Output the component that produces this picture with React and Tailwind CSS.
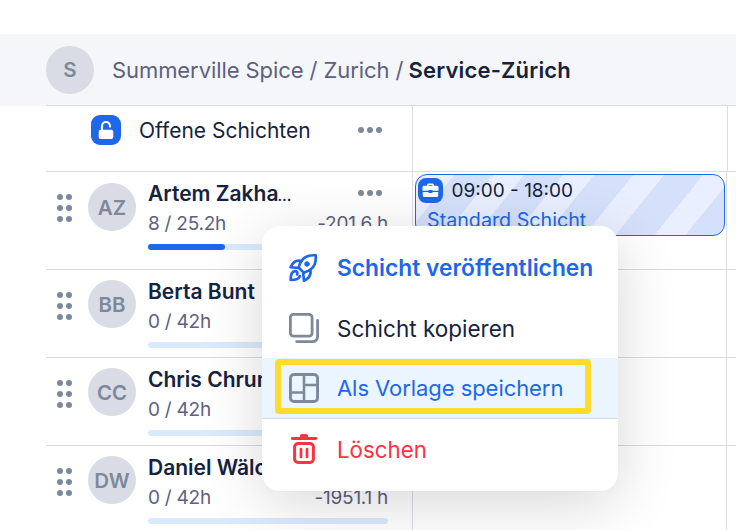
import React from "react";

const people = [
  { initials: "AZ", name: "Artem Zakha", cut: true, hours: "8 / 25.2h", balance: "-201.6 h", done: true, tall: true },
  { initials: "BB", name: "Berta Bunt", hours: "0 / 42h", balance: "" },
  { initials: "CC", name: "Chris Chrumm", hours: "0 / 42h", balance: "" },
  { initials: "DW", name: "Daniel Wälchli", hours: "0 / 42h", balance: "-1951.1 h" },
];

function More() {
  return (
    <div className="flex gap-[3px]">
      <span className="size-1.5 rounded-full bg-[#7d899b]" />
      <span className="size-1.5 rounded-full bg-[#7d899b]" />
      <span className="size-1.5 rounded-full bg-[#7d899b]" />
    </div>
  );
}

function Grip() {
  return (
    <div className="mt-[22px] grid h-[28px] w-[15px] shrink-0 grid-cols-2 gap-x-[3px] gap-y-[4.6px]">
      {[0, 1, 2, 3, 4, 5].map((i) => (
        <span key={i} className="size-1.5 rounded-full bg-[#7d899b]" />
      ))}
    </div>
  );
}

function Avatar({ children }) {
  return (
    <div className="flex size-12 shrink-0 items-center justify-center rounded-full bg-[#d9dce4] pt-[2px] text-[20.5px] font-semibold text-[#7d899b]">
      {children}
    </div>
  );
}

function Person({ p }) {
  return (
    <div className={`flex border-b border-[#d9dce4] ${p.tall ? "h-[98px]" : "h-[88px]"}`}>
      <div className="flex w-[367px] shrink-0 border-r border-[#d9dce4] pl-[10.5px]">
        <Grip />
        <div className={`ml-[16.5px] ${p.tall ? "pt-[11px]" : "pt-[10px]"}`}>
          <Avatar>{p.initials}</Avatar>
        </div>
        <div className="ml-3 w-60 pt-2">
          <div className="flex h-7 items-center justify-between">
            <span className="text-[21px] font-semibold whitespace-nowrap text-[#15233f]">
              {p.name}
              {p.cut && <span className="-ml-px text-[14.5px]">…</span>}
            </span>
            {p.tall && <div className="mr-1.5 -mt-[2px]"><More /></div>}
          </div>
          <div className="mt-0.5 flex h-7 items-center justify-between text-[19px] tracking-[-0.25px] text-[#5b6180]">
            <span>{p.hours}</span>
            <span>{p.balance}</span>
          </div>
          <div className="mt-1.5 h-1.5 rounded-full bg-[#d9ebff]">
            {p.done && <div className="h-1.5 w-[77px] rounded-full bg-[#1d67ea]" />}
          </div>
        </div>
      </div>
      <div className="w-[314px] shrink-0 border-r border-[#d9dce4] pt-0.5 pl-0.5">{p.tall && <Shift />}</div>
    </div>
  );
}

function Shift() {
  return (
    <div className="h-[62px] w-[310px] overflow-hidden rounded-[12px] border border-[#1d67ea] bg-[repeating-linear-gradient(129deg,#d5e0fb_0px,#d5e0fb_5.5px,#e9effe_5.5px,#e9effe_29.6px,#d5e0fb_29.6px,#d5e0fb_54.4px)] pt-[3px] pl-0.5">
      <div className="flex h-[25px] items-center">
        <div className="flex size-[25px] items-center justify-center rounded-lg bg-[#1d67ea]">
          <svg width="17" height="15" viewBox="0 0 17 15" fill="#fff">
            <path d="M5 3V2a1.500 1.500 0 0 1 1.500-1.500h4A1.500 1.500 0 0 1 12 2v1h-1.600V2H6.600v1z" />
            <path d="M2 2.800h13a1.500 1.500 0 0 1 1.500 1.500v3.400H10.500V7H6.500v.7H.5V4.300A1.500 1.500 0 0 1 2 2.800z" />
            <path d="M.8 8.900h5.700v1.100h4V8.900h5.700v3.900a1.300 1.300 0 0 1-1.300 1.300H2.100a1.300 1.300 0 0 1-1.300-1.300z" />
          </svg>
        </div>
        <span className="mt-[2px] ml-[8.5px] text-[19px] text-[#15233f]">09:00 - 18:00</span>
      </div>
      <div className="mt-[2px] ml-[9px] text-[19.700px] leading-[30px] text-[#1d67ea]">Standard Schicht</div>
    </div>
  );
}

function Rocket() {
  return (
    <svg width="30" height="30" viewBox="0 0 30 30" fill="none" stroke="#1d67ea" strokeWidth="2.700" strokeLinecap="round" strokeLinejoin="round">
      <path d="M26.700 2.300c-6-.4-10.700 1-13.700 5-1.700 2.300-2.700 4.700-3.400 7.200l5.100 5.100c2.500-.7 5-1.700 7.200-3.400 4-3 5.300-8 4.800-13.900z" />
      <path d="M12.500 8C7.500 6.700 4 8.500 1.600 14.200l7.600.8M21.200 16.700c1.300 5-.7 8.600-6.200 11l-.8-7.600" />
      <path d="M5.600 18.200C2.500 18.700 1.700 21.500 1.700 27c6 0 8.700-.8 9.200-4M5.600 18.200c2.200-.2 3.400 1.400 2.600 3.300" />
      <circle cx="18" cy="11" r="2.300" fill="#1d67ea" strokeWidth="1" />
    </svg>
  );
}

function Copy() {
  return (
    <svg width="30" height="30" viewBox="0 0 30 30" fill="none" stroke="#7d899b" strokeWidth="2.800" strokeLinecap="round">
      <rect x="1.400" y="1.400" width="21.700" height="21.700" rx="3" />
      <path d="M28.600 7.500v16.100a5 5 0 0 1-5 5h-16" />
    </svg>
  );
}

function Template() {
  return (
    <svg width="30" height="30" viewBox="0 0 30 30" fill="none" stroke="#7d899b" strokeWidth="2.900">
      <rect x="1.450" y="1.450" width="27.100" height="27.100" rx="3.500" />
      <path d="M15 2v26M2 19.500h13M15 12h13" strokeWidth="2.600" />
    </svg>
  );
}

function Trash() {
  return (
    <svg width="30" height="30" viewBox="0 0 30 30" fill="none" stroke="#fb323f" strokeLinecap="round">
      <path d="M3.300 4.500h23.400" strokeWidth="2.800" />
      <path d="M11 4V2a2 2 0 0 1 2-2h4a2 2 0 0 1 2 2v2z" fill="#fb323f" stroke="none" />
      <rect x="5.600" y="9.500" width="18.800" height="19" rx="3.500" strokeWidth="3" />
      <path d="M12 15v8M18 15v8" strokeWidth="2.700" />
    </svg>
  );
}

function Menu() {
  return (
    <div className="absolute top-[226px] left-[262px] h-[265px] w-[356px] rounded-[18px] bg-white py-3 shadow-[0_12px_60px_rgba(0,0,0,0.16)]">
      <div className="flex h-15 items-center gap-[18px] pl-[27px] text-[22.800px] font-semibold text-[#1d67ea]">
        <Rocket />
        <span className="pt-px">Schicht veröffentlichen</span>
      </div>
      <div className="flex h-15 items-center gap-[18px] pl-[27px] text-[22.500px] text-[#15233f]">
        <Copy />
        <span className="pt-px">Schicht kopieren</span>
      </div>
      <div className="relative flex h-[61px] items-center gap-[18px] border-b border-[#d3dae8] bg-[#eaf5ff] pl-[27px] text-[22px] tracking-[-0.06px] text-[#1d67ea]">
        <Template />
        <span>Als Vorlage speichern</span>
        <div className="absolute top-px left-[13px] h-[55px] w-[316px] rounded-[4px] border-6 border-[#ffdb2b]" />
      </div>
      <div className="flex h-15 items-center gap-[18px] pl-[27px] text-[22.300px] text-[#fb323f]">
        <Trash />
        <span className="pt-px">Löschen</span>
      </div>
    </div>
  );
}

export default function App() {
  return (
    <div className="relative h-[530px] w-[736px] overflow-hidden bg-white pt-[34px] font-['Inter','Liberation_Sans',sans-serif]">
      <header className="h-[72px] bg-[#f5f6fa] pl-[46px]">
        <div className="flex h-[72px] items-center border-b border-[#d9dce4]">
          <Avatar>S</Avatar>
          <span className="mt-[2px] ml-[18px] w-[296.500px] shrink-0 text-[22px] tracking-[-0.08px] whitespace-nowrap text-[#5b6180]">Summerville Spice / Zurich /</span>
          <span className="mt-[2px] text-[22px] font-semibold tracking-[0.18px] whitespace-nowrap text-[#15233f]">Service-Zürich</span>
        </div>
      </header>
      <main className="ml-[46px]">
        <div className="flex h-[66px] border-b border-[#d9dce4]">
          <div className="flex w-[367px] shrink-0 border-r border-[#d9dce4] pl-[45px]">
            <div className="mt-[9px] flex size-[30px] shrink-0 items-center justify-center rounded-[9px] bg-[#1d67ea]">
              <svg width="18" height="20" viewBox="0 0 18 20" fill="none">
                <rect x="1.700" y="9.700" width="14.600" height="9.300" rx="2" fill="#fff" />
                <path d="M5 10.500V6a4 4 0 0 1 8 0v.6" stroke="#fff" strokeWidth="2.200" strokeLinecap="round" />
              </svg>
            </div>
            <span className="ml-[18px] h-[50px] w-[219px] text-[21px] leading-[50px] whitespace-nowrap text-[#15233f]">Offene Schichten</span>
            <div className="mt-[21px]"><More /></div>
          </div>
          <div className="w-[315px] shrink-0 border-r border-[#d9dce4]" />
        </div>
        {people.map((p) => (
          <Person key={p.initials} p={p} />
        ))}
      </main>
      <Menu />
    </div>
  );
}
